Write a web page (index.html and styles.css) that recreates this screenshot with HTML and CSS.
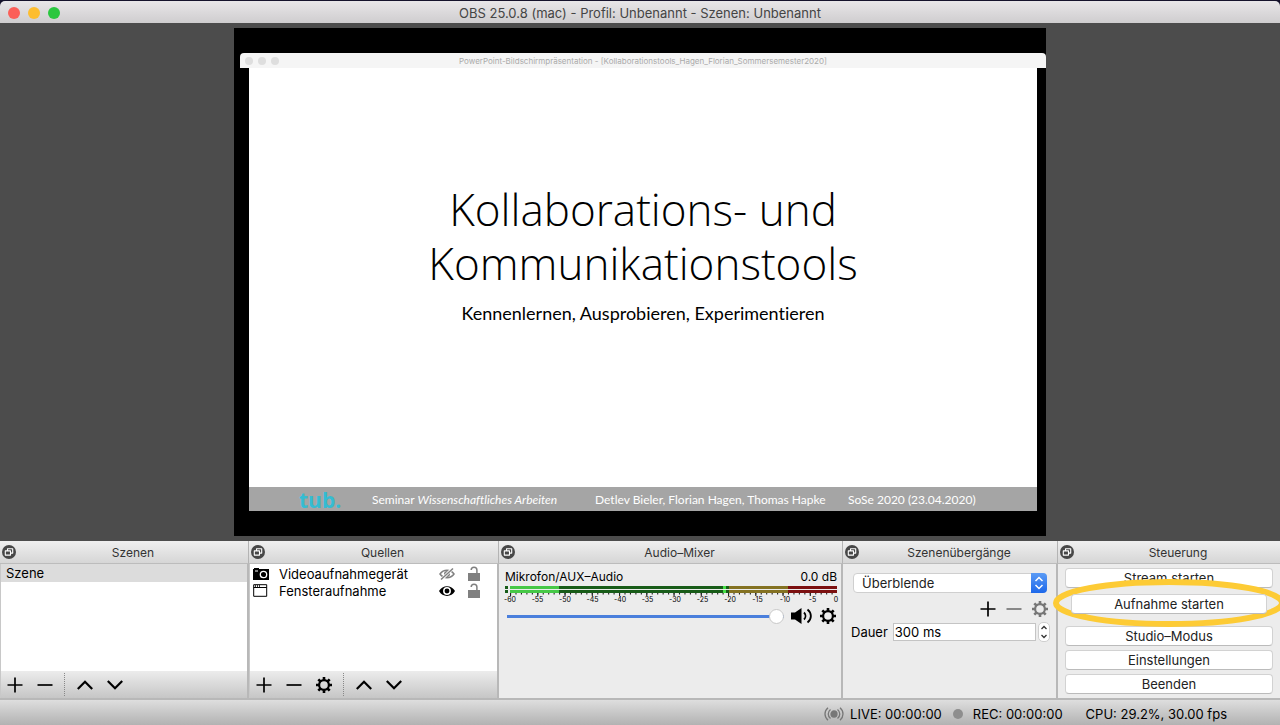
FILE: index.html
```html
<!DOCTYPE html>
<html lang="de">
<head>
    <meta charset="UTF-8">
    <meta name="viewport" content="width=device-width, initial-scale=1.0">
    <title>OBS 25.0.8 (mac) - Profil: Unbenannt - Szenen: Unbenannt</title>
    <link rel="stylesheet" href="styles.css">
</head>
<body>
<!-- shared icons -->
<svg class="sprite" aria-hidden="true">
    <symbol id="float" viewBox="0 0 14 14">
        <circle cx="7" cy="7" r="7" fill="#474747"/>
        <path d="M5.5 5.5V3.8h5.2v4.3H8.9M3.3 5.9h5.2v4.2H3.3z" fill="none" stroke="#fff" stroke-width="1.1" stroke-linejoin="round"/>
    </symbol>
    <symbol id="plus" viewBox="0 0 16 16"><path d="M8 .5v15M.5 8h15" stroke="currentColor" stroke-width="1.7"/></symbol>
    <symbol id="minus" viewBox="0 0 16 16"><path d="M.5 8h15" stroke="currentColor" stroke-width="1.7"/></symbol>
    <symbol id="up" viewBox="0 0 16 16"><path d="M.8 12 8 4.7l7.2 7.3" fill="none" stroke="currentColor" stroke-width="2.2"/></symbol>
    <symbol id="down" viewBox="0 0 16 16"><path d="M.8 4 8 11.3 15.2 4" fill="none" stroke="currentColor" stroke-width="2.2"/></symbol>
    <symbol id="gear" viewBox="0 0 16 16">
        <circle cx="8" cy="8" r="4.9" fill="none" stroke="currentColor" stroke-width="2.2"/>
        <path d="M8 0v3M8 13v3M0 8h3M13 8h3M2.3 2.3l2.2 2.2M11.5 11.5l2.2 2.2M2.3 13.7l2.2-2.2M11.5 4.5l2.2-2.2" stroke="currentColor" stroke-width="2.6"/>
    </symbol>
    <symbol id="lock" viewBox="0 0 14 16">
        <path d="M1 7h12v8H1z" fill="currentColor"/>
        <path d="M4.2 4C4.2 2.200 5.400 1.200 7 1.200s2.900 1.100 2.900 2.800V8" fill="none" stroke="currentColor" stroke-width="1.5"/>
    </symbol>
</svg>

<div class="window">
    <header class="titlebar">
        <div class="lights"><i class="close"></i><i class="min"></i><i class="max"></i></div>
        <h1>OBS 25.0.8 (mac) - Profil: Unbenannt - Szenen: Unbenannt</h1>
    </header>

    <main class="preview">
        <div class="canvas">
            <div class="capture-bar">
                <div class="capture-lights"><i></i><i></i><i></i></div>
                <span>PowerPoint-Bildschirmpräsentation - [Kollaborationstools_Hagen_Florian_Sommersemester2020]</span>
            </div>
            <div class="slide">
                <div class="slide-text">
                    <h2>Kollaborations- und<br>Kommunikationstools</h2>
                    <p>Kennenlernen, Ausprobieren, Experimentieren</p>
                </div>
                <div class="slide-footer">
                    <b class="tub">tub.</b>
                    <span class="seminar">Seminar <em>Wissenschaftliches Arbeiten</em></span>
                    <span class="authors">Detlev Bieler, Florian Hagen, Thomas Hapke</span>
                    <span>SoSe 2020 (23.04.2020)</span>
                </div>
            </div>
        </div>
    </main>

    <div class="docks">
        <section class="dock">
            <div class="dock-title"><svg><use href="#float"/></svg><h3>Szenen</h3></div>
            <div class="dock-body list">
                <ul class="scenes"><li>Szene</li></ul>
                <div class="toolbar">
                    <button aria-label="Hinzufügen"><svg><use href="#plus"/></svg></button>
                    <button aria-label="Entfernen"><svg><use href="#minus"/></svg></button>
                    <span class="divider"></span>
                    <button aria-label="Nach oben"><svg><use href="#up"/></svg></button>
                    <button aria-label="Nach unten"><svg><use href="#down"/></svg></button>
                </div>
            </div>
        </section>

        <section class="dock">
            <div class="dock-title"><svg><use href="#float"/></svg><h3>Quellen</h3></div>
            <div class="dock-body list">
                <ul class="sources">
                    <li>
                        <svg viewBox="0 0 16 16">
                            <path d="M0 3h1V2h5v1h10v11H0z"/>
                            <circle cx="10.500" cy="8.500" r="3.200" fill="none" stroke="#fff" stroke-width="1.300"/>
                            <path d="M2 5h3" stroke="#fff"/>
                        </svg>
                        <span>Videoaufnahmegerät</span>
                        <svg class="eye off" viewBox="0 0 16 16">
                            <path d="M1 8c3.500-5 10.500-5 14 0-3.500 5-10.500 5-14 0z" fill="none" stroke="currentColor" stroke-width="1.500"/>
                            <circle cx="8" cy="8" r="3" fill="currentColor"/>
                            <path d="M2 14 14 2" stroke="#fff" stroke-width="3"/>
                            <path d="M2 13.500 14 2.500" stroke="currentColor" stroke-width="1.500"/>
                        </svg>
                        <svg class="lock"><use href="#lock"/></svg>
                    </li>
                    <li>
                        <svg viewBox="0 0 16 16">
                            <path d="M.7 1.700h13v11.600H.7zM.7 4.500h13" fill="none" stroke="#000" stroke-width="1"/>
                            <path d="M2 3h6" stroke="#000" stroke-width="1.500" stroke-dasharray="1 1"/>
                        </svg>
                        <span>Fensteraufnahme</span>
                        <svg class="eye" viewBox="0 0 16 16">
                            <path d="M0 8c3.500-6.500 12.500-6.500 16 0-3.500 6.500-12.500 6.500-16 0z"/>
                            <circle cx="8" cy="8" r="3.200" fill="none" stroke="#fff" stroke-width="1.500"/>
                        </svg>
                        <svg class="lock"><use href="#lock"/></svg>
                    </li>
                </ul>
                <div class="toolbar">
                    <button aria-label="Hinzufügen"><svg><use href="#plus"/></svg></button>
                    <button aria-label="Entfernen"><svg><use href="#minus"/></svg></button>
                    <button aria-label="Eigenschaften"><svg><use href="#gear"/></svg></button>
                    <span class="divider"></span>
                    <button aria-label="Nach oben"><svg><use href="#up"/></svg></button>
                    <button aria-label="Nach unten"><svg><use href="#down"/></svg></button>
                </div>
            </div>
        </section>

        <section class="dock">
            <div class="dock-title"><svg><use href="#float"/></svg><h3>Audio–Mixer</h3></div>
            <div class="dock-body mixer">
                <div class="channel"><label for="volume">Mikrofon/AUX–Audio</label><span>0.0 dB</span></div>
                <div class="meter">
                    <div class="clip"></div>
                    <div class="scale">
                        <div class="level"></div>
                        <div class="level"></div>
                        <svg class="ticks" viewBox="0 0 60 4" preserveAspectRatio="none">
                            <path d="M0 1h60.200" stroke="#222" stroke-width="2" stroke-dasharray=".2 .8"/>
                            <path d="M0 2h60.200" stroke="#222" stroke-width="4" stroke-dasharray=".2 4.800"/>
                        </svg>
                        <div class="numbers">
                            <span>-60</span><span>-55</span><span>-50</span><span>-45</span><span>-40</span><span>-35</span><span>-30</span><span>-25</span><span>-20</span><span>-15</span><span>-10</span><span>-5</span><span>0</span>
                        </div>
                    </div>
                </div>
                <div class="volume">
                    <input type="range" id="volume" min="0" max="100" value="100">
                    <button class="speaker" aria-label="Stumm">
                        <svg viewBox="0 0 22 16">
                            <path d="M0 4.500h4L10.500 0v16L4 11.500H0z"/>
                            <path d="M13 4.500c2 2 2 5 0 7M16.500 1.500c4.500 3.500 4.500 9.500 0 13" fill="none" stroke="#000" stroke-width="1.800"/>
                        </svg>
                    </button>
                    <button aria-label="Audio-Einstellungen"><svg><use href="#gear"/></svg></button>
                </div>
            </div>
        </section>

        <section class="dock">
            <div class="dock-title"><svg><use href="#float"/></svg><h3>Szenenübergänge</h3></div>
            <div class="dock-body transitions">
                <div class="select">
                    <select aria-label="Übergang"><option>Überblende</option></select>
                    <svg viewBox="0 0 16 20"><path d="M4.500 8 8 4.500 11.500 8M4.500 12 8 15.500 11.500 12" fill="none" stroke="#fff" stroke-width="1.500"/></svg>
                </div>
                <div class="actions">
                    <button aria-label="Hinzufügen"><svg><use href="#plus"/></svg></button>
                    <button aria-label="Entfernen" disabled><svg><use href="#minus"/></svg></button>
                    <button aria-label="Eigenschaften" disabled><svg><use href="#gear"/></svg></button>
                </div>
                <div class="duration">
                    <label for="duration">Dauer</label>
                    <input type="text" id="duration" value="300 ms">
                    <button class="stepper" aria-label="Dauer ändern">
                        <svg viewBox="0 0 12 20"><path d="M3.500 7 6 4.500 8.500 7M3.500 13 6 15.500 8.500 13" fill="none" stroke="#333" stroke-width="1.300"/></svg>
                    </button>
                </div>
            </div>
        </section>

        <section class="dock">
            <div class="dock-title"><svg><use href="#float"/></svg><h3>Steuerung</h3></div>
            <div class="dock-body controls">
                <button>Stream starten</button>
                <div class="record">
                    <svg class="marker" viewBox="0 0 232 50" preserveAspectRatio="none">
                        <ellipse cx="116" cy="25" rx="113" ry="21" fill="#ececec" stroke="#fdcb35" stroke-width="6"/>
                    </svg>
                    <button>Aufnahme starten</button>
                </div>
                <button>Studio–Modus</button>
                <button>Einstellungen</button>
                <button>Beenden</button>
            </div>
        </section>
    </div>

    <footer class="status">
        <svg class="live" viewBox="0 0 20 14" fill="none" stroke="#777" stroke-width="1.300">
            <circle cx="10" cy="7" r="3" fill="#777"/>
            <path d="M6.500 2.500c-3 2.500-3 6.500 0 9M13.500 2.500c3 2.500 3 6.500 0 9M4 .8c-4 3.500-4 8.900 0 12.400M16 .8c4 3.500 4 8.900 0 12.400"/>
        </svg>
        <span>LIVE: 00:00:00</span>
        <i class="dot"></i>
        <span>REC: 00:00:00</span>
        <span class="cpu">CPU: 29.2%, 30.00 fps</span>
    </footer>
</div>
</body>
</html>
```
FILE: styles.css
```css
* {
    box-sizing: border-box;
}
body {
    margin: 0;
    background: #15122b;
    font-family: Inter, "Liberation Sans", sans-serif;
    font-size: 13px;
    line-height: 16px;
    color: #000;
}
h1, h2, h3, p, ul {
    margin: 0;
    padding: 0;
    font-weight: normal;
}
ul {
    list-style: none;
}
svg {
    display: block;
    flex: none;
    width: 16px;
    height: 16px;
}
button {
    display: flex;
    align-items: center;
    justify-content: center;
    padding: 0;
    border: none;
    background: none;
    color: #000;
    font: inherit;
}
button:disabled {
    color: #777;
}
.sprite {
    display: none;
}
.window {
    display: flex;
    flex-direction: column;
    height: 100vh;
    min-height: 480px;
    padding-top: 1px;
    overflow: hidden;
}

/* title bar */
.titlebar {
    display: grid;
    grid-template-columns: 1fr auto 1fr;
    align-items: center;
    height: 22px;
    padding: 1px 8px 0;
    border-radius: 5px 5px 0 0;
    background: linear-gradient(#e8e6e8, #cfcdcf);
}
.titlebar h1 {
    font-size: 13px;
    color: #444;
}
.lights {
    display: flex;
    gap: 8px;
}
.lights i {
    width: 12px;
    height: 12px;
    border-radius: 50%;
}
.close {
    background: #fb5f58;
}
.min {
    background: #fdbd2f;
}
.max {
    background: #2ac73f;
}

/* preview */
.preview {
    flex: 1;
    display: flex;
    justify-content: center;
    min-height: 0;
    padding: 5px 0;
    background: #4c4c4c;
}
.canvas {
    display: flex;
    flex-direction: column;
    height: 100%;
    min-width: 0;
    aspect-ratio: 812 / 508;
    padding: 25px 0 25px 6px;
    background: #000;
}
.capture-bar {
    display: grid;
    grid-template-columns: 1fr auto 1fr;
    align-items: center;
    height: 15px;
    padding: 0 5px;
    border-radius: 4px 4px 0 0;
    background: #f5f5f5;
    font-size: 8px;
    color: #aaa;
}
.capture-lights {
    display: flex;
    gap: 5px;
}
.capture-lights i {
    width: 8px;
    height: 8px;
    border-radius: 50%;
    background: #dedede;
}
.slide {
    flex: 1;
    display: flex;
    flex-direction: column;
    margin: 0 9px;
    background: #fff;
    font-family: Lato, "Liberation Sans", sans-serif;
    font-variant-ligatures: none;
}
.slide-text {
    flex: 1;
    padding-top: 114px;
    text-align: center;
}
.slide-text h2 {
    font-family: "Open Sans", sans-serif;
    font-size: 44px;
    font-weight: 300;
    line-height: 54px;
}
.slide-text p {
    margin-top: 12px;
    font-size: 18px;
    line-height: 22px;
}
.slide-footer {
    display: flex;
    align-items: center;
    height: 24px;
    padding: 2px 0 0 50px;
    background: #a5a5a5;
    color: #fff;
    font-size: 12px;
    white-space: nowrap;
}
.tub {
    width: 73px;
    font-family: "Open Sans", sans-serif;
    font-size: 21px;
    color: #35bcd2;
}
.seminar {
    width: 223px;
}
.authors {
    width: 253px;
}

/* docks */
.docks {
    display: grid;
    grid-template-columns: 249fr 250fr 344fr 215fr 222fr;
    height: 159px;
    border-bottom: 2px solid #b8b8b8;
    background: #ececec;
}
.dock {
    display: flex;
    flex-direction: column;
    min-width: 0;
}
.dock-title {
    display: grid;
    grid-template-columns: 14px 1fr;
    align-items: center;
    height: 23px;
    padding: 0 2px;
    border-right: 1px solid #b4b4b4;
    border-bottom: 1px solid #bcbcbc;
    background: linear-gradient(#efefef, #d6d6d6);
}
.dock-title svg {
    width: 14px;
    height: 14px;
}
.dock-title h3 {
    padding: 2px 0 0 4px;
    font-size: 12px;
    color: #333;
    text-align: center;
}
.dock-body {
    flex: 1;
    border-right: 2px solid #b8b8b8;
}
.dock:last-child .dock-title,
.dock:last-child .dock-body {
    border-right: none;
}
.list {
    display: flex;
    flex-direction: column;
    border-left: 1px solid #c8c8c8;
    background: #fff;
}
.list ul {
    flex: 1;
}
.scenes li {
    height: 18px;
    padding: 1px 5px;
    background: #dcdcdc;
}
.sources {
    padding-top: 1px;
}
.sources li {
    display: flex;
    align-items: center;
    height: 17px;
    padding: 0 16px 0 3px;
}
.sources span {
    flex: 1;
    padding-left: 10px;
}
.eye.off, .lock {
    color: #808080;
}
.lock {
    width: 14px;
    margin-left: 12px;
}
.toolbar {
    display: flex;
    height: 27px;
    background: linear-gradient(#ececec, #c6c6c6);
}
.toolbar button {
    width: 30px;
}
.toolbar button:first-child {
    margin-left: -1px;
}
.divider {
    width: 1px;
    margin: 2px 5px 2px 4px;
    border-left: 1px dotted #888;
}

/* audio mixer */
.mixer {
    padding: 5px 4px 0 6px;
}
.channel {
    display: flex;
    justify-content: space-between;
    font-size: 12px;
}
.meter {
    display: flex;
    gap: 2px;
    margin-top: 1px;
}
.clip {
    width: 3px;
    height: 7px;
    border: solid #185c18;
    border-width: 3px 0;
}
.scale {
    flex: 1;
}
.level {
    height: 3px;
    margin-bottom: 1px;
    background: linear-gradient(90deg, #46c846 15%, #185c18 15% 65%, #46e046 65% 66%, #185c18 66% 67%, #847222 67% 85%, #7c1010 85%);
}
.level + .level {
    margin-bottom: 0;
}
.ticks {
    width: 100%;
    height: 3px;
}
.numbers {
    display: flex;
    justify-content: space-between;
    margin: 0 -2px 0 -7px;
    font-size: 7px;
    line-height: 7px;
}
.numbers span {
    width: 14px;
    text-align: center;
}
.numbers span:last-child {
    width: 6px;
}
.volume {
    display: flex;
    align-items: center;
    gap: 7px;
    margin-top: 5px;
    padding-right: 1px;
}
.volume input {
    flex: 1;
    min-width: 0;
    height: 16px;
    margin: 0 0 0 2px;
    appearance: none;
    background: linear-gradient(#4a7fdc, #4a7fdc) center / 100% 3px no-repeat;
}
.volume input::-webkit-slider-thumb {
    appearance: none;
    width: 15px;
    height: 15px;
    border: 1px solid #c8c8c8;
    border-radius: 50%;
    background: #fff;
}
.speaker svg {
    width: 22px;
}

/* transitions */
.transitions {
    padding: 9px 8px 0;
}
.select {
    position: relative;
    margin: 0 1px 0 2px;
}
.select select {
    display: block;
    width: 100%;
    height: 20px;
    padding: 0 8px;
    border: 1px solid #cfcfcf;
    border-radius: 4px;
    appearance: none;
    background: #fff;
    color: #222;
    font: inherit;
}
.select svg {
    position: absolute;
    top: 0;
    right: 0;
    width: 16px;
    height: 20px;
    border-radius: 0 4px 4px 0;
    background: linear-gradient(#5b9bf5, #1d68ea);
    pointer-events: none;
}
.actions {
    display: flex;
    justify-content: flex-end;
    gap: 10px;
    margin-top: 8px;
}
.duration {
    display: flex;
    align-items: center;
    margin: 5px -2px 0 0;
}
.duration input {
    flex: 1;
    min-width: 0;
    height: 18px;
    margin: 0 2px 0 5px;
    padding: 0 1px;
    border: 1px solid #c4c4c4;
    background: #fff;
    font: inherit;
}
.stepper {
    width: 12px;
    height: 20px;
    border: 1px solid #cfcfcf;
    border-radius: 5px;
    background: #fff;
}
.stepper svg {
    width: 12px;
    height: 20px;
}

/* controls */
.controls {
    display: flex;
    flex-direction: column;
    gap: 4px;
    padding: 4px 7px;
}
.controls button {
    width: 100%;
    height: 20px;
    border: 1px solid #d2d2d2;
    border-bottom-color: #bbb;
    border-radius: 4px;
    background: #fff;
    color: #222;
}
.record {
    position: relative;
    margin: 2px 6px 8px;
}
.record button {
    position: relative;
}
.marker {
    position: absolute;
    top: -16px;
    left: -18px;
    width: calc(100% + 36px);
    height: 50px;
}

/* status bar */
.status {
    display: flex;
    align-items: center;
    justify-content: flex-end;
    height: 25px;
    padding: 3px 53px 0 0;
    background: linear-gradient(#dedede, #b2b2b2);
}
.live {
    width: 20px;
    height: 14px;
    margin-right: 6px;
}
.dot {
    width: 10px;
    height: 10px;
    margin: 0 10px 0 11px;
    border-radius: 50%;
    background: #8e8e8e;
}
.cpu {
    margin-left: 23px;
}
```
